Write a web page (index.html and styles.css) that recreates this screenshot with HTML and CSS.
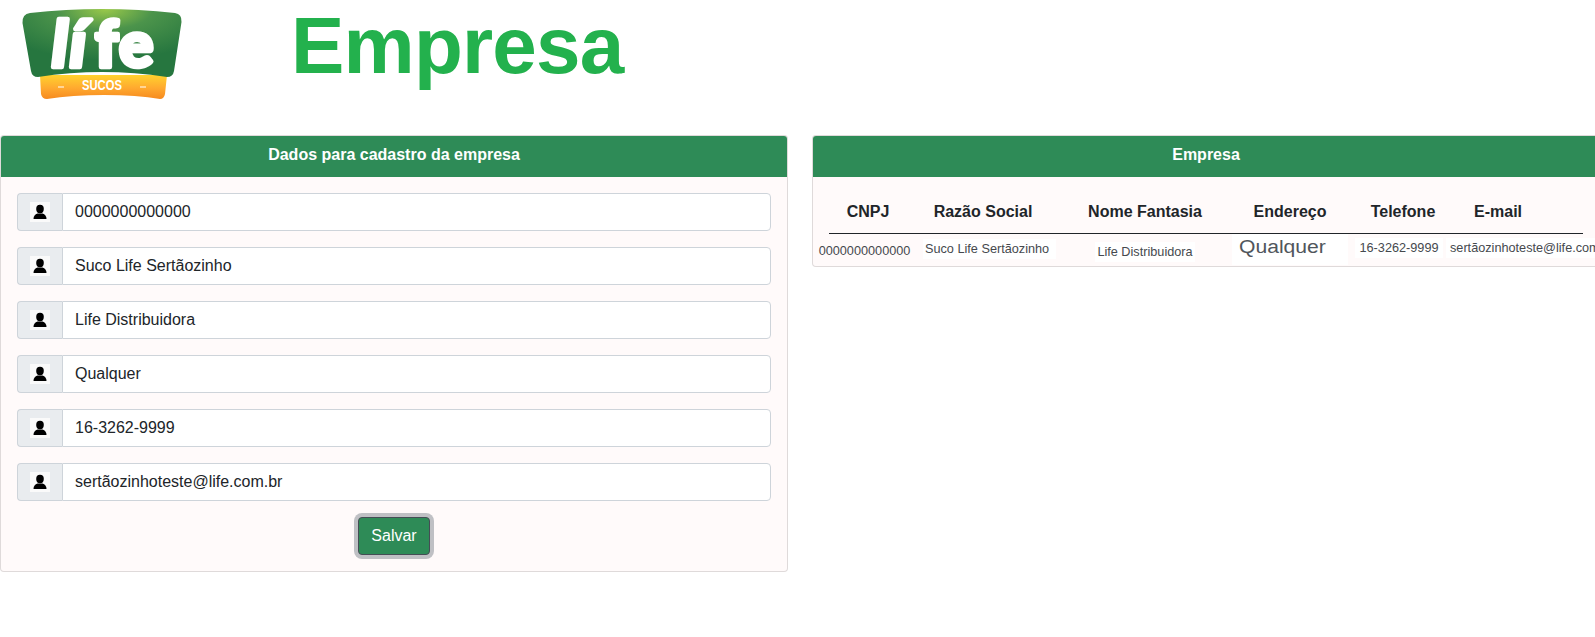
FILE: index.html
```html
<!DOCTYPE html>
<html lang="pt-BR">
<head>
<meta charset="utf-8">
<title>Empresa</title>
<link rel="stylesheet" href="styles.css">
</head>
<body>
<div class="page">
  <header class="top">
    <svg class="logo" viewBox="0 -9 160 101" width="160" height="101" aria-label="Life Sucos">
      <defs>
        <radialGradient id="lg" cx="0.52" cy="0" r="0.75">
          <stop offset="0" stop-color="#9ac94a"/>
          <stop offset="0.4" stop-color="#4c944b"/>
          <stop offset="1" stop-color="#26763f"/>
        </radialGradient>
        <linearGradient id="og" x1="0" y1="0" x2="0" y2="1">
          <stop offset="0" stop-color="#ffd22e"/>
          <stop offset="0.55" stop-color="#ffa92f"/>
          <stop offset="1" stop-color="#f68a1f"/>
        </linearGradient>
      </defs>
      <path d="M18 66 L19 85 Q20 90 25 90 Q50 86 82 86 Q115 86 138 90 Q142 90 143 85 L145 66 Z" fill="url(#og)"/>
      <path d="M8 4 Q80 -4 153 4 Q160 5 159.500 13 L152 62 Q151 68 145 68 Q80 58 16 68 Q10 68 9 62 L0.500 14 Q0 5 8 4 Z" fill="url(#lg)"/>
      <text class="logo-life" x="30" y="58">lí</text>
      <text class="logo-life logo-upright" x="73" y="58">fe</text>
      <text class="logo-sucos" x="60" y="81" textLength="40" lengthAdjust="spacingAndGlyphs">SUCOS</text>
      <path d="M36 78h6M118 78h6" stroke="#fff" stroke-width="1.200"/>
    </svg>
    <h1 class="title">Empresa</h1>
  </header>

  <main class="cards">
    <section class="card">
      <h2 class="card-head">Dados para cadastro da empresa</h2>
      <form class="card-body form">
        <div class="group"><span class="addon"><svg class="user" viewBox="0 0 20 20"><ellipse cx="10" cy="7" rx="3.800" ry="4.200"/><path d="M3.500 17c0-3 1.500-4.500 4-5.500h5c2.500 1 4 2.500 4 5.500z"/></svg></span><input class="field" type="text" value="0000000000000"></div>
        <div class="group"><span class="addon"><svg class="user" viewBox="0 0 20 20"><ellipse cx="10" cy="7" rx="3.800" ry="4.200"/><path d="M3.500 17c0-3 1.500-4.500 4-5.500h5c2.500 1 4 2.500 4 5.500z"/></svg></span><input class="field" type="text" value="Suco Life Sertãozinho"></div>
        <div class="group"><span class="addon"><svg class="user" viewBox="0 0 20 20"><ellipse cx="10" cy="7" rx="3.800" ry="4.200"/><path d="M3.500 17c0-3 1.500-4.500 4-5.500h5c2.500 1 4 2.500 4 5.500z"/></svg></span><input class="field" type="text" value="Life Distribuidora"></div>
        <div class="group"><span class="addon"><svg class="user" viewBox="0 0 20 20"><ellipse cx="10" cy="7" rx="3.800" ry="4.200"/><path d="M3.500 17c0-3 1.500-4.500 4-5.500h5c2.500 1 4 2.500 4 5.500z"/></svg></span><input class="field" type="text" value="Qualquer"></div>
        <div class="group"><span class="addon"><svg class="user" viewBox="0 0 20 20"><ellipse cx="10" cy="7" rx="3.800" ry="4.200"/><path d="M3.500 17c0-3 1.500-4.500 4-5.500h5c2.500 1 4 2.500 4 5.500z"/></svg></span><input class="field" type="text" value="16-3262-9999"></div>
        <div class="group"><span class="addon"><svg class="user" viewBox="0 0 20 20"><ellipse cx="10" cy="7" rx="3.800" ry="4.200"/><path d="M3.500 17c0-3 1.500-4.500 4-5.500h5c2.500 1 4 2.500 4 5.500z"/></svg></span><input class="field" type="text" value="sertãozinhoteste@life.com.br"></div>
        <div class="actions"><button class="save" type="button">Salvar</button></div>
      </form>
    </section>

    <section class="card">
      <h2 class="card-head">Empresa</h2>
      <div class="card-body list">
        <table class="table">
          <colgroup>
            <col class="c1"><col class="c2"><col class="c3"><col class="c4"><col class="c5"><col class="c6">
          </colgroup>
          <thead>
            <tr><th>CNPJ</th><th>Razão Social</th><th>Nome Fantasia</th><th>Endereço</th><th>Telefone</th><th class="th-mail">E-mail</th></tr>
          </thead>
          <tbody>
            <tr>
              <td><div class="cell cell-cnpj"><span>0000000000000</span></div></td>
              <td><div class="cell cell-razao"><span class="chip chip-razao">Suco Life Sertãozinho</span></div></td>
              <td><div class="cell cell-nome"><span class="chip chip-nome">Life Distribuidora</span></div></td>
              <td><div class="cell cell-end"><span class="chip chip-end"><span class="stretched">Qualquer</span></span></div></td>
              <td><div class="cell cell-tel"><span class="chip chip-tel">16-3262-9999</span></div></td>
              <td><div class="cell cell-mail"><span class="chip chip-mail">sertãozinhoteste@life.com.br</span></div></td>
            </tr>
          </tbody>
        </table>
      </div>
    </section>
  </main>
</div>
</body>
</html>
```

FILE: styles.css
```css
* { box-sizing: border-box; }

html, body {
  margin: 0;
  background: #fff;
  overflow: hidden;
}

body {
  font-family: "Liberation Sans", Arial, sans-serif;
  font-size: 16px;
  color: #212529;
}

.page {
  width: 1595px;
  height: 637px;
  overflow: hidden;
}

.top {
  display: flex;
  align-items: flex-start;
  height: 135px;
  padding-left: 22px;
}

.logo {
  flex: none;
}

.logo-life {
  font-family: Lato, "Liberation Sans", sans-serif;
  font-weight: 900;
  font-style: italic;
  font-size: 64px;
  letter-spacing: 2px;
  fill: #fff;
  stroke: #fff;
  stroke-width: 4.500px;
  stroke-linejoin: round;
}

.logo-upright {
  font-style: normal;
  letter-spacing: 1.500px;
}

.logo-sucos {
  font-family: "Liberation Sans", sans-serif;
  font-weight: 700;
  font-size: 14px;
  fill: #fff;
}

.title {
  margin: 0 0 0 109px;
  font-size: 80px;
  line-height: 92px;
  font-weight: 700;
  letter-spacing: -0.800px;
  color: #23b14d;
}

.cards {
  display: grid;
  grid-template-columns: 788px 788px;
  column-gap: 24px;
  align-items: start;
}

.card {
  border: 1px solid rgba(0, 0, 0, .125);
  border-radius: 4px;
  background: #fffafa;
  overflow: hidden;
}

.card-head {
  margin: 0;
  height: 41px;
  background: #2e8b57;
  color: #fff;
  font-size: 16px;
  font-weight: 700;
  line-height: 38px;
  text-align: center;
}

.form {
  padding: 16px 16px 0;
  height: 394px;
}

.group {
  display: flex;
  height: 38px;
  margin-bottom: 16px;
}

.addon {
  flex: none;
  display: flex;
  align-items: center;
  padding: 0 12px;
  background: #e9ecef;
  border: 1px solid #ced4da;
  border-right: 0;
  border-radius: 4px 0 0 4px;
}

.user {
  display: block;
  width: 20px;
  height: 20px;
  background: #fafafa;
  fill: #000;
}

.field {
  flex: 1;
  min-width: 0;
  height: 38px;
  padding: 0 12px;
  font: inherit;
  color: #212529;
  background: #fff;
  border: 1px solid #ced4da;
  border-radius: 0 4px 4px 0;
  outline: 0;
}

.actions {
  display: flex;
  justify-content: center;
  margin-top: 2px;
}

.save {
  width: 72px;
  height: 38px;
  padding: 0;
  font: inherit;
  color: #fff;
  background: #2e8b57;
  border: 1px solid #454d55;
  border-radius: 4px;
  box-shadow: 0 0 0 4px #bfc0c4;
}

.list {
  height: 89px;
  padding: 16px 0 0 16px;
}

.table {
  width: 754px;
  table-layout: fixed;
  border-collapse: collapse;
}

.c1 { width: 78px; }
.c2 { width: 152px; }
.c3 { width: 172px; }
.c4 { width: 118px; }
.c5 { width: 108px; }
.c6 { width: 126px; }

.table th {
  height: 40px;
  padding: 0 0 2px;
  font-size: 16px;
  font-weight: 700;
  text-align: center;
  border-bottom: 1px solid #212529;
}

.table .th-mail {
  padding-left: 17px;
  text-align: left;
}

.table td {
  padding: 0;
  height: 32px;
  vertical-align: top;
}

.cell {
  display: flex;
  justify-content: center;
  white-space: nowrap;
  font-size: 12.700px;
  line-height: 20px;
  color: #45494e;
}

.cell > span { flex: none; }

.cell-cnpj { margin: 7px 0 0 -7px; }
.cell-razao { margin: 5px 0 0 13px; }
.cell-nome { margin-top: 8px; }
.cell-end { margin-top: 0; }
.cell-tel { margin-top: 4px; margin-left: -8px; }
.cell-mail { margin-top: 4px; justify-content: flex-start; margin-left: -11px; }

.chip { background: #fff; padding: 0 2px; display: block; }
.chip-razao { width: 133px; }
.chip-nome { width: 100px; text-align: center; }
.chip-end { width: 116px; height: 31px; padding-left: 7px; }
.chip-tel { width: 88px; text-align: center; }
.chip-mail { padding-left: 4px; }

.stretched {
  display: inline-block;
  margin-top: 5px;
  font-size: 16px;
  line-height: 16px;
  transform: scale(1.320, 1.100);
  transform-origin: left top;
  color: #50565c;
}
```
